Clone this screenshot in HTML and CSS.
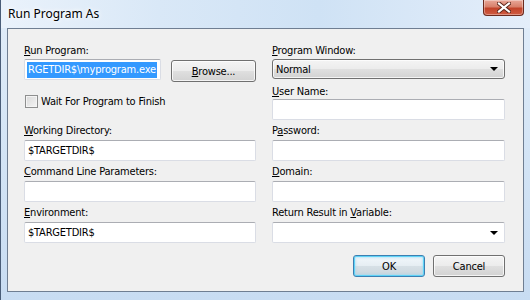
FILE: index.html
```html
<!DOCTYPE html>
<html>
<head>
<meta charset="utf-8">
<link rel="stylesheet" href="styles.css">
</head>
<body>
<div class="window">
  <div class="titlebar">
    <span class="title">Run Program As</span>
    <div class="close">
      <svg width="14" height="11" viewBox="0 0 14 11">
        <path d="M2 1.5 L12 9.5 M12 1.5 L2 9.5" stroke="#5a2418" stroke-width="4" stroke-linecap="square" fill="none"/>
        <path d="M2 1.5 L12 9.5 M12 1.5 L2 9.5" stroke="#ffffff" stroke-width="2.2" stroke-linecap="square" fill="none"/>
      </svg>
    </div>
  </div>
  <div class="client">
    <div class="col left">
      <div class="label first"><u>R</u>un Program:</div>
      <div class="row">
        <div class="field program"><span class="sel">RGETDIR$\myprogram.exe</span></div>
        <div class="btn browse"><u>B</u>rowse...</div>
      </div>
      <div class="check-row">
        <span class="check"></span>
        <span>Wait For Program to Finish</span>
      </div>
      <div class="label after-check"><u>W</u>orking Directory:</div>
      <div class="field">$TARGETDIR$</div>
      <div class="label"><u>C</u>ommand Line Parameters:</div>
      <div class="field"></div>
      <div class="label"><u>E</u>nvironment:</div>
      <div class="field">$TARGETDIR$</div>
    </div>
    <div class="col right">
      <div class="label first"><u>P</u>rogram Window:</div>
      <div class="combo">
        <span>Normal</span>
        <span class="arrow"></span>
      </div>
      <div class="label after-combo"><u>U</u>ser Name:</div>
      <div class="field"></div>
      <div class="label">P<u>a</u>ssword:</div>
      <div class="field"></div>
      <div class="label"><u>D</u>omain:</div>
      <div class="field"></div>
      <div class="label">Return Result in <u>V</u>ariable:</div>
      <div class="field dropdown"><span class="arrow"></span></div>
      <div class="buttons">
        <div class="btn default">OK</div>
        <div class="btn">Cancel</div>
      </div>
    </div>
  </div>
</div>
</body>
</html>
```

FILE: styles.css
```css
html, body {
  margin: 0;
  padding: 0;
}
body {
  width: 530px;
  height: 300px;
  overflow: hidden;
  font-family: "DejaVu Sans Condensed", "DejaVu Sans", sans-serif;
  font-size: 11px;
  letter-spacing: -0.2px;
  color: #000;
}
.window {
  width: 530px;
  height: 300px;
  box-sizing: border-box;
  border-left: 1px solid #4a5d78;
  background: linear-gradient(180deg, #e2edf9 0%, #d6e6f6 40%, #c8dcf2 100%);
  display: flex;
  flex-direction: column;
}
.titlebar {
  height: 28px;
  display: flex;
  align-items: flex-start;
  justify-content: space-between;
  background: linear-gradient(90deg, #eaf2fb 0%, #d9e8f7 30%, #cfe2f5 60%, #e4eefa 100%);
}
.title {
  font-family: "Noto Sans", "Open Sans", sans-serif;
  font-size: 12px;
  letter-spacing: 0;
  line-height: 16px;
  padding: 6px 0 0 7px;
  color: #000;
  text-shadow: 0 0 6px #fff, 0 0 4px #fff;
}
.close {
  width: 41px;
  height: 16px;
  margin-right: 6px;
  box-sizing: border-box;
  border: 1px solid #6b2a1e;
  border-top: none;
  border-radius: 0 0 4px 4px;
  background: linear-gradient(180deg, #e9a899 0%, #d8806b 45%, #c2432a 55%, #cf5c42 100%);
  display: flex;
  align-items: center;
  justify-content: center;
  box-shadow: inset 0 0 0 1px rgba(255,255,255,0.35);
}
.client {
  margin: 0 6px 0 6px;
  height: 264px;
  box-sizing: border-box;
  border: 1px solid #6f7e92;
  background: #f0f0f0;
  display: flex;
  gap: 16px;
  padding: 15px 17px 0 16px;
}
.col {
  display: flex;
  flex-direction: column;
}
.left { width: 232px; }
.right { width: 233px; }
.label {
  line-height: 13px;
  height: 13px;
  margin-top: 4px;
  margin-bottom: 3px;
  white-space: nowrap;
}
.label.first { margin-top: 0; margin-bottom: 2px; }
.label.after-check { margin-top: 15px; }
.label.after-combo { margin-top: 6px; margin-bottom: 1px; }
.field {
  height: 21px;
  box-sizing: border-box;
  background: #fff;
  border: 1px solid #dadde5;
  border-top-color: #abadb3;
  border-radius: 2px;
  padding: 0 3px;
  line-height: 19px;
  white-space: nowrap;
  overflow: hidden;
  flex: none;
}
.row {
  display: flex;
  align-items: flex-start;
  gap: 10px;
}
.field.program {
  width: 137px;
  padding: 0 2px;
}
.sel {
  display: inline-block;
  background: #3399ff;
  color: #fff;
  line-height: 16px;
  margin-top: 1px;
  padding: 0 1px;
}
.btn {
  height: 22px;
  box-sizing: border-box;
  border: 1px solid #707070;
  border-radius: 3px;
  background: linear-gradient(180deg, #f4f4f4 0%, #ececec 48%, #dfdfdf 52%, #d2d2d2 100%);
  box-shadow: inset 0 0 0 1px rgba(255,255,255,0.75);
  display: flex;
  align-items: center;
  justify-content: center;
  flex: none;
}
.browse {
  width: 85px;
  margin-top: 1px;
}
.check-row {
  display: flex;
  align-items: center;
  gap: 3px;
  margin-top: 12px;
  height: 15px;
}
.check {
  width: 13px;
  height: 13px;
  box-sizing: border-box;
  border: 1px solid #8e8f8f;
  background: linear-gradient(135deg, #d9d9d9 0%, #f4f4f4 100%);
  box-shadow: inset 0 0 0 1px #f4f4f4;
  margin-left: 1px;
}
.combo {
  height: 20px;
  box-sizing: border-box;
  border: 1px solid #707070;
  border-radius: 3px;
  background: linear-gradient(180deg, #f4f4f4 0%, #ececec 48%, #dfdfdf 52%, #d2d2d2 100%);
  box-shadow: inset 0 0 0 1px rgba(255,255,255,0.75);
  display: flex;
  align-items: center;
  justify-content: space-between;
  padding: 0 6px 0 3px;
}
.arrow {
  width: 0;
  height: 0;
  border-left: 4px solid transparent;
  border-right: 4px solid transparent;
  border-top: 4px solid #000;
}
.field.dropdown {
  display: flex;
  align-items: center;
  justify-content: flex-end;
  padding-right: 6px;
}
.buttons {
  display: flex;
  justify-content: flex-end;
  gap: 8px;
  margin-top: 12px;
}
.buttons .btn { width: 72px; height: 22px; }
.btn.default {
  border-color: #3c7fb1;
  box-shadow: inset 0 0 0 1px #5fd3f7, inset 0 0 2px 2px rgba(150,215,245,0.5);
  background: linear-gradient(180deg, #f2f8fc 0%, #e6eef3 48%, #d6e0e6 52%, #cbd6dd 100%);
}
u { text-decoration: underline; text-underline-offset: 1px; }
```
